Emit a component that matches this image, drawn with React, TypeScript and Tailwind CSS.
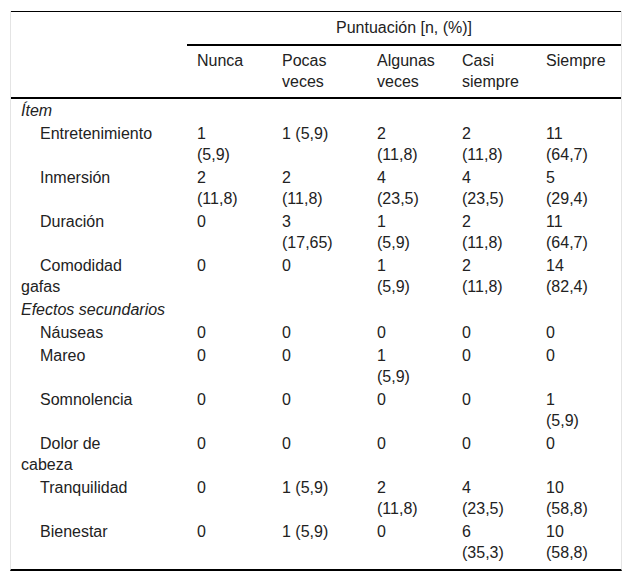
import React from "react";

type Row =
  | { kind: "section"; label: string }
  | { kind: "data"; label: string[]; cells: string[][] };

const rows: Row[] = [
  { kind: "section", label: "Ítem" },
  {
    kind: "data",
    label: ["Entretenimiento"],
    cells: [["1", "(5,9)"], ["1 (5,9)"], ["2", "(11,8)"], ["2", "(11,8)"], ["11", "(64,7)"]],
  },
  {
    kind: "data",
    label: ["Inmersión"],
    cells: [["2", "(11,8)"], ["2", "(11,8)"], ["4", "(23,5)"], ["4", "(23,5)"], ["5", "(29,4)"]],
  },
  {
    kind: "data",
    label: ["Duración"],
    cells: [["0"], ["3", "(17,65)"], ["1", "(5,9)"], ["2", "(11,8)"], ["11", "(64,7)"]],
  },
  {
    kind: "data",
    label: ["Comodidad", "gafas"],
    cells: [["0"], ["0"], ["1", "(5,9)"], ["2", "(11,8)"], ["14", "(82,4)"]],
  },
  { kind: "section", label: "Efectos secundarios" },
  {
    kind: "data",
    label: ["Náuseas"],
    cells: [["0"], ["0"], ["0"], ["0"], ["0"]],
  },
  {
    kind: "data",
    label: ["Mareo"],
    cells: [["0"], ["0"], ["1", "(5,9)"], ["0"], ["0"]],
  },
  {
    kind: "data",
    label: ["Somnolencia"],
    cells: [["0"], ["0"], ["0"], ["0"], ["1", "(5,9)"]],
  },
  {
    kind: "data",
    label: ["Dolor de", "cabeza"],
    cells: [["0"], ["0"], ["0"], ["0"], ["0"]],
  },
  {
    kind: "data",
    label: ["Tranquilidad"],
    cells: [["0"], ["1 (5,9)"], ["2", "(11,8)"], ["4", "(23,5)"], ["10", "(58,8)"]],
  },
  {
    kind: "data",
    label: ["Bienestar"],
    cells: [["0"], ["1 (5,9)"], ["0"], ["6", "(35,3)"], ["10", "(58,8)"]],
  },
];

function Lines({ lines }: { lines: string[] }) {
  return (
    <>
      {lines.map((l, i) => (
        <React.Fragment key={i}>
          {i > 0 && <br />}
          {l}
        </React.Fragment>
      ))}
    </>
  );
}

export default function App() {
  const headers = [["Nunca"], ["Pocas", "veces"], ["Algunas", "veces"], ["Casi", "siempre"], ["Siempre"]];
  return (
    <div className="min-h-[581px] w-[632px] bg-white pt-[11px] pl-[10px]">
      <div
        className="w-[612px] border-x border-[#e4e4e4] pb-[5px] border-b-2 border-b-black text-[16px] leading-[21px] text-[#222]"
        style={{ fontFamily: '"Liberation Sans", Arial, sans-serif' }}
      >
        <table className="w-[610px] table-fixed border-collapse">
          <colgroup>
            <col className="w-[176px]" />
            <col className="w-[85px]" />
            <col className="w-[95px]" />
            <col className="w-[85px]" />
            <col className="w-[84px]" />
            <col className="w-[85px]" />
          </colgroup>
          <thead>
            <tr className="border-t border-black">
              <th className="p-0" />
              <th
                colSpan={5}
                className="border-b-2 border-black pt-[5px] pb-[6px] text-center font-normal"
              >
                Puntuación [n, (%)]
              </th>
            </tr>
            <tr className="border-b-2 border-black">
              <th className="p-0" />
              {headers.map((h, i) => (
                <th key={i} className="pl-[10px] pt-[4px] pb-[5px] text-left align-top font-normal">
                  <Lines lines={h} />
                </th>
              ))}
            </tr>
          </thead>
          <tbody>
            {rows.map((r, i) =>
              r.kind === "section" ? (
                <tr key={i}>
                  <td colSpan={6} className="pl-[10px] py-[1px] italic">
                    {r.label}
                  </td>
                </tr>
              ) : (
                <tr key={i}>
                  <td className="pl-[10px] py-[1px] align-top indent-[19px]">
                    <Lines lines={r.label} />
                  </td>
                  {r.cells.map((c, j) => (
                    <td key={j} className="pl-[10px] py-[1px] align-top whitespace-nowrap">
                      <Lines lines={c} />
                    </td>
                  ))}
                </tr>
              )
            )}
          </tbody>
        </table>
      </div>
    </div>
  );
}
